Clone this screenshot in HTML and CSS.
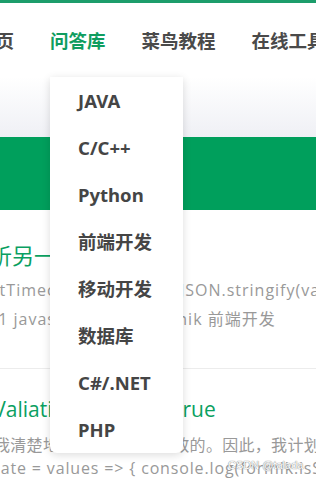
FILE: index.html
```html
<!DOCTYPE html>
<html lang="zh-CN">
<head>
    <meta charset="UTF-8">
    <meta name="viewport" content="width=device-width, initial-scale=1.0">
    <title>问答库</title>
    <link rel="stylesheet" href="styles.css">
</head>
<body>
    <header class="topbar">
        <nav class="nav">
            <a class="nav-item" href="#">首页</a>
            <div class="nav-drop">
                <a class="nav-item active" href="#">问答库</a>
                <ul class="dropdown">
                    <li>JAVA</li>
                    <li>C/C++</li>
                    <li>Python</li>
                    <li>前端开发</li>
                    <li>移动开发</li>
                    <li>数据库</li>
                    <li>C#/.NET</li>
                    <li>PHP</li>
                </ul>
            </div>
            <a class="nav-item" href="#">菜鸟教程</a>
            <a class="nav-item" href="#">在线工具</a>
        </nav>
    </header>

    <div class="subbar"></div>
    <div class="banner"></div>

    <main class="list">
        <div class="question">
            <h2 class="q-title t1">分析另一个值</h2>
            <p class="q-text x1">setTimeout(() => { alert(JSON.stringify(values, null, 2))</p>
            <p class="q-meta m1">回答 1 javascript react formik 前端开发</p>
        </div>
        <div class="question">
            <h2 class="q-title t2">Formik Valiation 总是返回 True</h2>
            <p class="q-text x2">我清楚地知道这些值是无效的。因此，我计划</p>
            <p class="q-text x3">const validate = values => { console.log(formik.isSubmitting)</p>
        </div>
    </main>

    <span class="watermark">CSDN @talada</span>
</body>
</html>
```

FILE: styles.css
```css
/* Base */
body {
    margin: 0;
    width: 316px;
    height: 482px;
    overflow: hidden;
    position: relative;
    font-family: "Open Sans", "Noto Sans CJK SC", sans-serif;
    background: #ffffff;
    color: #444;
}

/* Top navigation */
.topbar {
    border-top: 3px solid #1c9d6b;
    height: 74px;
    background: #fff;
}

.nav {
    display: flex;
    align-items: center;
    gap: 36px;
    height: 74px;
    margin-left: -23px;
    white-space: nowrap;
}

.nav-item {
    font-family: "Noto Sans CJK SC", sans-serif;
    font-size: 18.5px;
    font-weight: bold;
    color: #4a4a4a;
    text-decoration: none;
}

.nav-item.active {
    color: #0f9d5f;
}

.nav-drop {
    position: relative;
}

/* Dropdown menu */
.dropdown {
    position: absolute;
    top: 50px;
    left: 0;
    width: 105px;
    margin: 0;
    padding: 0 0 0 28px;
    list-style: none;
    background: #fff;
    border-radius: 0 0 7px 7px;
    box-shadow: 0 2px 8px rgba(0, 0, 0, 0.14);
    z-index: 5;
}

.dropdown li {
    height: 47px;
    line-height: 47px;
    font-family: "Noto Sans", "Noto Sans CJK SC", sans-serif;
    font-size: 18.5px;
    font-weight: bold;
    color: #454545;
}

/* Bars under nav */
.subbar {
    height: 60px;
    background: linear-gradient(#ffffff, #eff0f5);
}

.banner {
    height: 73px;
    background: #009f5c;
}

/* Question list */
.list {
    white-space: nowrap;
}

.question {
    padding: 28px 0 34px;
    border-bottom: 1px solid #ececec;
}

.question + .question {
    padding: 24px 0 0;
    border-bottom: none;
}

.q-title {
    margin: 0;
    font-weight: normal;
    color: #0aa061;
    line-height: 32px;
}

.t1 {
    font-family: "Noto Sans CJK SC", sans-serif;
    font-size: 22px;
    margin-left: -32px;
}

.t2 {
    font-size: 21px;
    word-spacing: -1px;
    margin-left: -79px;
}

.q-text,
.q-meta {
    margin: 0;
    font-size: 16px;
    letter-spacing: 1px;
    color: #999;
    line-height: 29px;
}

.q-text {
    margin-top: 6px;
}

.x1 {
    margin-left: -19px;
}

.m1 {
    margin-left: -41px;
}

.x2 {
    letter-spacing: 0.3px;
    margin-left: -6px;
    margin-top: 8px;
    line-height: 24px;
}

.x3 {
    letter-spacing: 0.85px;
    margin-left: -88px;
    margin-top: 0;
    line-height: 22px;
}

.watermark {
    position: absolute;
    left: 228px;
    top: 459px;
    font-family: "Liberation Sans", sans-serif;
    font-size: 11px;
    color: #fff;
    text-shadow: 0 0 1px #888, 0 0 1px #888;
}
```
